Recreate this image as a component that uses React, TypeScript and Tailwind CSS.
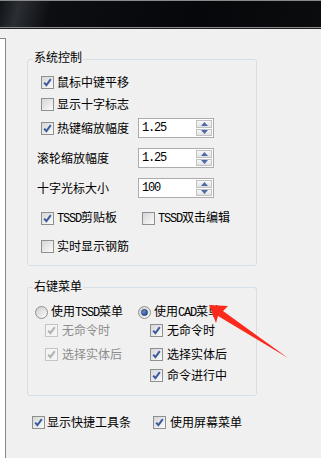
import type { ReactNode } from 'react';

const M = ({ children }: { children: ReactNode }) => (
  <span className="font-['Liberation_Mono',monospace] tracking-[-1.2px]">{children}</span>
);

function Check({ checked, disabled }: { checked?: boolean; disabled?: boolean }) {
  return (
    <span
      className={`flex h-[13px] w-[13px] shrink-0 items-center justify-center border ${
        disabled ? 'border-[#c4c4c4] bg-[#f4f4f4]' : 'border-[#8e8f8f] bg-gradient-to-br from-[#d6d6d6] to-[#fbfbfb]'
      }`}
    >
      {checked && (
        <svg width="11" height="11" viewBox="0 0 11 11">
          <path
            d="M2.2 5.6 L4.4 8.2 L8.8 2.2"
            fill="none"
            stroke={disabled ? '#b0b0b0' : '#3c5aa0'}
            strokeWidth="2"
          />
        </svg>
      )}
    </span>
  );
}

function Radio({ checked }: { checked?: boolean }) {
  return (
    <span className="flex h-[13px] w-[13px] shrink-0 items-center justify-center rounded-full border border-[#8e8f8f] bg-gradient-to-br from-[#cfcfcf] to-[#fafafa]">
      {checked && (
        <span className="h-[7px] w-[7px] rounded-full border border-[#1c3769] bg-gradient-to-br from-[#7b9fd8] to-[#1f4a9c]" />
      )}
    </span>
  );
}

function Spin({ value }: { value: string }) {
  return (
    <div className="flex h-[20px] w-[76px] border border-[#acacac] bg-white">
      <div className="flex flex-1 items-center pl-[3px]">
        <M>{value}</M>
      </div>
      <div className="flex w-[18px] flex-col gap-px p-px">
        {[0, 1].map((i) => (
          <div
            key={i}
            className="flex flex-1 items-center justify-center border border-[#c2c2c2] bg-gradient-to-b from-[#f8f8f8] to-[#e2e2e2]"
          >
            <svg width="7" height="4" viewBox="0 0 7 4">
              <path d={i === 0 ? 'M0 4 L3.5 0 L7 4 Z' : 'M0 0 L3.5 4 L7 0 Z'} fill="#4d6aa8" />
            </svg>
          </div>
        ))}
      </div>
    </div>
  );
}

function Group({ title, className, children }: { title: string; className: string; children: ReactNode }) {
  return (
    <div className={`relative rounded-[3px] border border-[#d5dfe5] ${className}`}>
      <span className="absolute left-[5px] bg-[#f0f0f0] px-[1px] leading-[14px]">{title}</span>
      {children}
    </div>
  );
}

function Item({ checked, disabled, label, gap = 'gap-[3px]' }: { checked?: boolean; disabled?: boolean; label: ReactNode; gap?: string }) {
  return (
    <div className={`flex items-center ${gap}`}>
      <Check checked={checked} disabled={disabled} />
      <span className={disabled ? 'text-[#8d8d8d]' : ''}>{label}</span>
    </div>
  );
}

export default function App() {
  return (
    <div className="relative h-[458px] w-[321px] overflow-hidden bg-[#f0f0f0] font-['Noto_Sans_CJK_SC',sans-serif] text-[12px] leading-[14px] text-black">
      <div className="h-[27px] border-t border-[#8a8a8a] bg-[linear-gradient(105deg,#101317_0%,#2b2e33_6%,#0c0e11_16%,#05070a_60%,#0b0c0e_100%)]" />
      <div className="h-px bg-[#8c8c8c]" />
      <div className="h-px bg-[#1e1e1e]" />

      <div className="flex h-[429px]">
        <div className="mt-[9px] w-[6px] border-r border-t border-[#828790] bg-white" />

        <div className="ml-[21px] w-[230px]">
          <Group title="系统控制" className="mt-[30px] h-[207px] [&>span]:top-[-10px]">
            <div className="flex flex-col pt-[12px]">
              <div className="flex h-[20px] items-center pl-[13px]">
                <Item checked label="鼠标中键平移" />
              </div>
              <div className="mt-[2px] flex h-[20px] items-center pl-[13px]">
                <Item label="显示十字标志" />
              </div>
              <div className="mt-[4px] flex h-[20px] items-center pl-[13px]">
                <div className="w-[97px]">
                  <Item checked label="热键缩放幅度" />
                </div>
                <Spin value="1.25" />
              </div>
              <div className="mt-[10px] flex h-[20px] items-center pl-[9px]">
                <span className="w-[101px]">滚轮缩放幅度</span>
                <Spin value="1.25" />
              </div>
              <div className="mt-[10px] flex h-[20px] items-center pl-[9px]">
                <span className="w-[101px]">十字光标大小</span>
                <Spin value="100" />
              </div>
              <div className="mt-[10px] flex h-[20px] items-center pl-[13px]">
                <div className="w-[101px]">
                  <Item checked label={<><M>TSSD</M>剪贴板</>} />
                </div>
                <Item label={<><M>TSSD</M>双击编辑</>} />
              </div>
              <div className="mt-[8px] flex h-[20px] items-center pl-[13px]">
                <Item label="实时显示钢筋" />
              </div>
            </div>
          </Group>

          <Group title="右键菜单" className="mt-[21px] h-[109px] [&>span]:top-[-9px]">
            <div className="flex pl-[7px] pt-[15px]">
              <div className="flex w-[103px] flex-col">
                <div className="flex h-[18px] items-center gap-[3px]">
                  <Radio />
                  <span>使用<M>TSSD</M>菜单</span>
                </div>
                <div className="flex h-[18px] items-center pl-[10px]">
                  <Item checked disabled label="无命令时" gap="gap-[4px]" />
                </div>
                <div className="mt-[6px] flex h-[18px] items-center pl-[10px]">
                  <Item checked disabled label="选择实体后" gap="gap-[4px]" />
                </div>
              </div>
              <div className="flex flex-col">
                <div className="flex h-[18px] items-center gap-[3px]">
                  <Radio checked />
                  <span>使用<M>CAD</M>菜单</span>
                </div>
                <div className="flex h-[18px] items-center pl-[12px]">
                  <Item checked label="无命令时" gap="gap-[4px]" />
                </div>
                <div className="mt-[6px] flex h-[18px] items-center pl-[12px]">
                  <Item checked label="选择实体后" gap="gap-[4px]" />
                </div>
                <div className="mt-[3px] flex h-[18px] items-center pl-[12px]">
                  <Item checked label="命令进行中" gap="gap-[4px]" />
                </div>
              </div>
            </div>
          </Group>

          <div className="mt-[16px] flex h-[20px] items-center pl-[5px]">
            <div className="w-[121px]">
              <Item checked label="显示快捷工具条" gap="gap-[2px]" />
            </div>
            <Item checked label="使用屏幕菜单" gap="gap-[4px]" />
          </div>
        </div>
      </div>

      <svg className="pointer-events-none absolute inset-0" width="321" height="458" viewBox="0 0 321 458">
        <polygon points="209,305 228,306 223,311 288,358 218,316 216,323" fill="#fb2a1c" />
      </svg>
    </div>
  );
}
